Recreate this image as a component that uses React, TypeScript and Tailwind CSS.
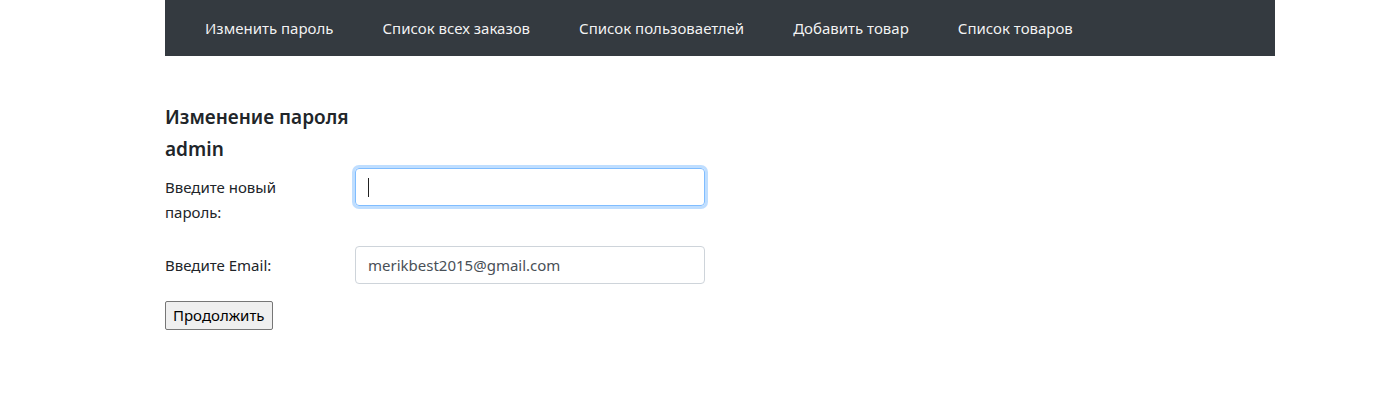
import React from "react";

const links = [
  "Изменить пароль",
  "Список всех заказов",
  "Список пользоваетлей",
  "Добавить товар",
  "Список товаров",
];

export default function App() {
  return (
    <div
      className="min-h-[400px] bg-white text-[#212529]"
      style={{ fontFamily: '"Noto Sans", "Open Sans", sans-serif' }}
    >
      <div className="w-[1110px] ml-[165px]">
        <nav className="h-14 bg-[#343a40] flex items-center pl-10 gap-[49px]">
          {links.map((l) => (
            <a key={l} href="#" className="text-[15px] text-white/95 whitespace-nowrap">
              {l}
            </a>
          ))}
        </nav>

        <div className="pt-[49px]">
          <h5 className="text-[19px] font-semibold leading-[24px] mb-2">Изменение пароля</h5>
          <h5 className="text-[19px] font-semibold leading-[24px] mb-[7px]">admin</h5>

          <div className="flex items-start">
            <label className="w-[190px] pr-[30px] pt-[7px] text-[15px] leading-[25px] text-[#212529]">
              Введите новый пароль:
            </label>
            <div className="relative">
              <input
                type="text"
                className="w-[350px] h-[38px] px-3 text-[15px] text-[#495057] border border-[#80bdff] rounded-[4px] shadow-[0_0_0_3px_rgba(0,123,255,0.25)] outline-none"
              />
              <span className="absolute left-[13px] top-[10px] w-px h-[19px] bg-[#222]" />
            </div>
          </div>

          <div className="flex items-start mt-[21px]">
            <label className="w-[190px] pr-[30px] pt-[7px] text-[15px] leading-[25px]">Введите Email:</label>
            <input
              type="text"
              defaultValue="merikbest2015@gmail.com"
              className="w-[350px] h-[38px] px-3 text-[15px] text-[#495057] border border-[#ced4da] rounded-[4px] outline-none"
            />
          </div>

          <button className="mt-[17px] h-[29px] px-[7px] text-[15px] text-black bg-[#efefef] border border-[#767676] rounded-[2px]">
            Продолжить
          </button>
        </div>
      </div>
    </div>
  );
}
